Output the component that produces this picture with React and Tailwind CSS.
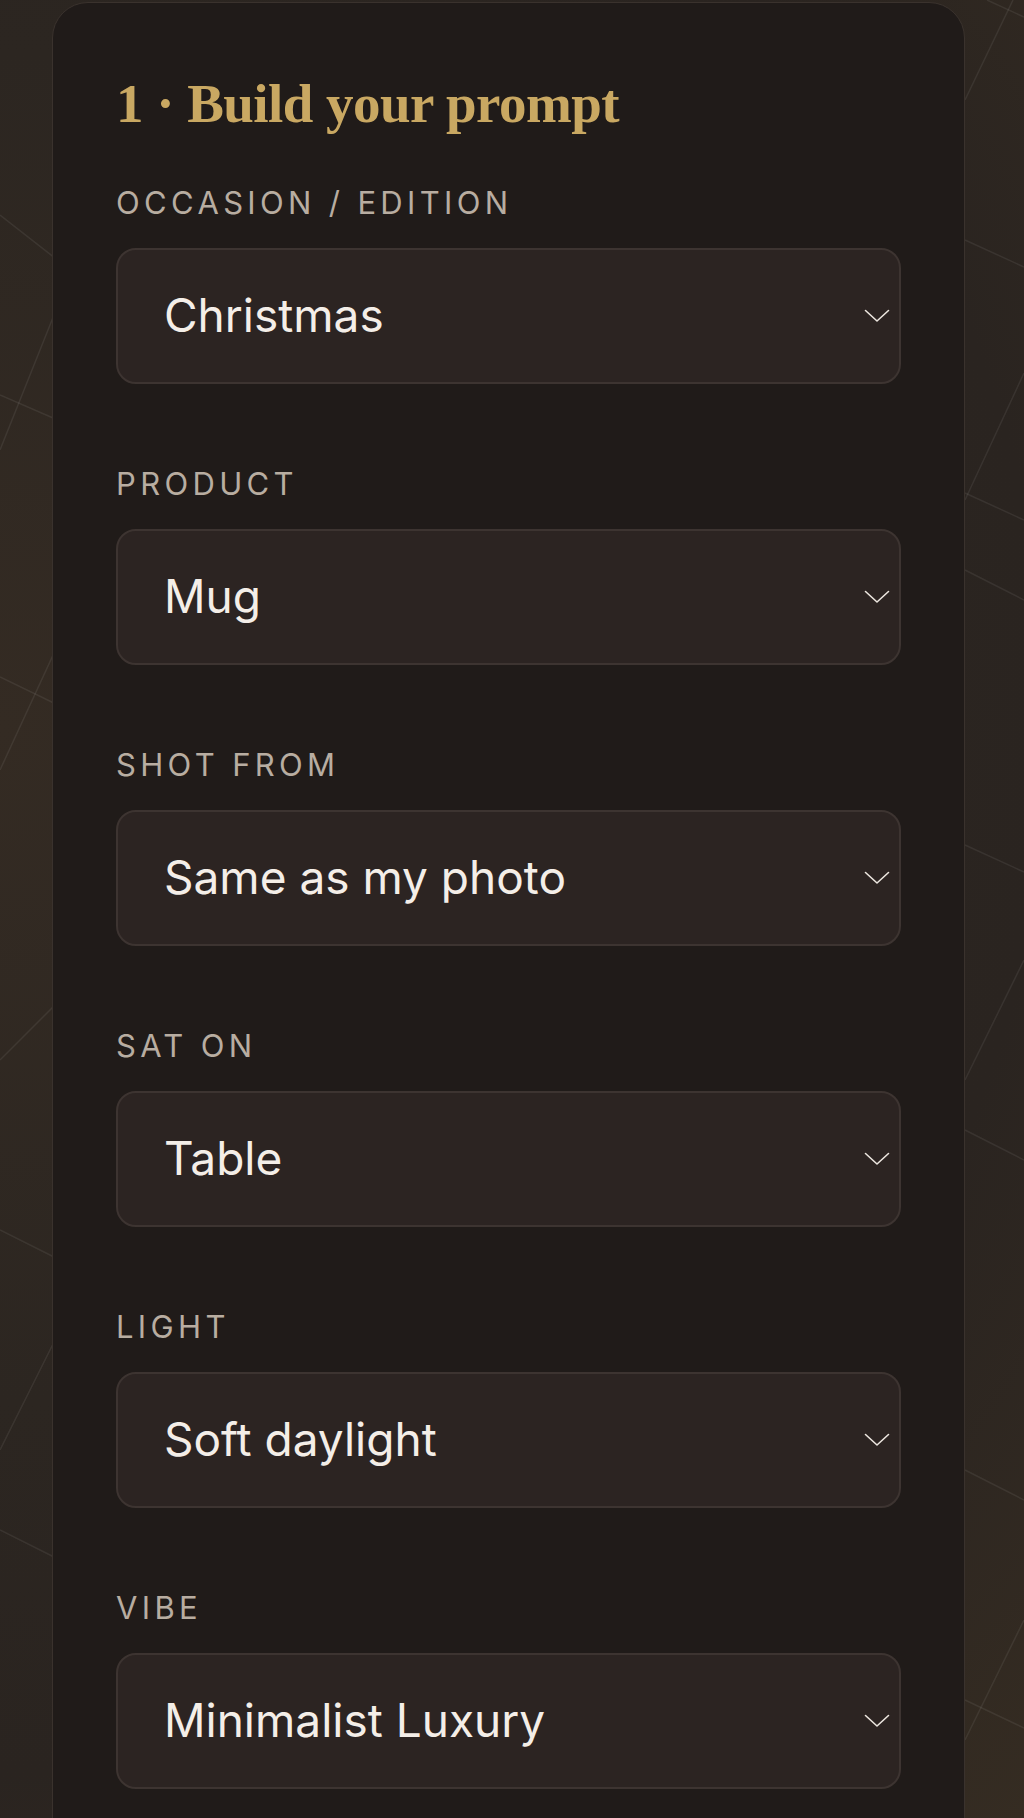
import React from "react";

const FIELDS = [
  { label: "Occasion / Edition", value: "Christmas" },
  { label: "Product", value: "Mug" },
  { label: "Shot from", value: "Same as my photo" },
  { label: "Sat on", value: "Table" },
  { label: "Light", value: "Soft daylight" },
  { label: "Vibe", value: "Minimalist Luxury" },
];

// faint geometric lines behind the card
const LINES = [
  [0, 215, 60, 262],
  [0, 450, 60, 300],
  [0, 395, 60, 421],
  [0, 677, 60, 706],
  [60, 640, 0, 770],
  [0, 1060, 60, 1000],
  [0, 1230, 60, 1260],
  [60, 1330, 0, 1450],
  [0, 1530, 60, 1560],
  [1013, 0, 965, 100],
  [987, 0, 1024, 17],
  [965, 240, 1024, 267],
  [1024, 373, 965, 500],
  [965, 493, 1024, 520],
  [965, 570, 1024, 600],
  [965, 845, 1024, 872],
  [1024, 960, 965, 1080],
  [965, 1130, 1024, 1160],
  [965, 1470, 1024, 1500],
  [1024, 1620, 965, 1740],
  [965, 1700, 1024, 1728],
];

function Chevron() {
  return (
    <svg width="26" height="14" viewBox="0 0 26 14" fill="none" className="shrink-0">
      <path d="M1.5 1.5 L13 12 L24.5 1.5" stroke="#ece6df" strokeWidth="1.6" strokeLinecap="round" strokeLinejoin="round" />
    </svg>
  );
}

function Field({ label, value }) {
  return (
    <div className="flex flex-col">
      <div className="mb-[27px] text-[31px] leading-[36px] uppercase tracking-[0.14em] text-[#b8ada1] [font-family:Inter,'Liberation_Sans',sans-serif]">
        {label}
      </div>
      <button
        type="button"
        className="flex h-[136px] w-full items-center justify-between rounded-[20px] border-2 border-[#3d3431] bg-[#2c2422] pl-[46px] pr-[9px] text-left"
      >
        <span className="text-[46px] leading-[1.2] text-[#f4eee8] [font-family:Inter,'Liberation_Sans',sans-serif]">
          {value}
        </span>
        <Chevron />
      </button>
    </div>
  );
}

export default function App() {
  return (
    <div className="relative h-[1818px] overflow-hidden bg-[radial-gradient(circle_at_0%_40%,#342b23_0%,#2c2621_45%,#2a2420_70%,#352c22_100%)]">
      <svg className="absolute inset-0 h-full w-full" viewBox="0 0 1024 1818" preserveAspectRatio="none">
        {LINES.map(([x1, y1, x2, y2], i) => (
          <line key={i} x1={x1} y1={y1} x2={x2} y2={y2} stroke="#ffffff" strokeOpacity="0.07" strokeWidth="1.5" />
        ))}
      </svg>
      <div className="relative ml-[52px] mt-[2px] w-[913px] rounded-[36px] border border-[#3a322d] bg-[#201b19] px-[63px] pb-[120px] pt-[68px]">
        <h2 className="mb-[48px] text-[55px] font-bold leading-[1.2] tracking-[-0.01em] text-[#c9a862] [font-family:'Liberation_Serif',serif]">
          1 · Build your prompt
        </h2>
        <div className="flex flex-col gap-[82px]">
          {FIELDS.map((f) => (
            <Field key={f.label} label={f.label} value={f.value} />
          ))}
        </div>
      </div>
    </div>
  );
}
